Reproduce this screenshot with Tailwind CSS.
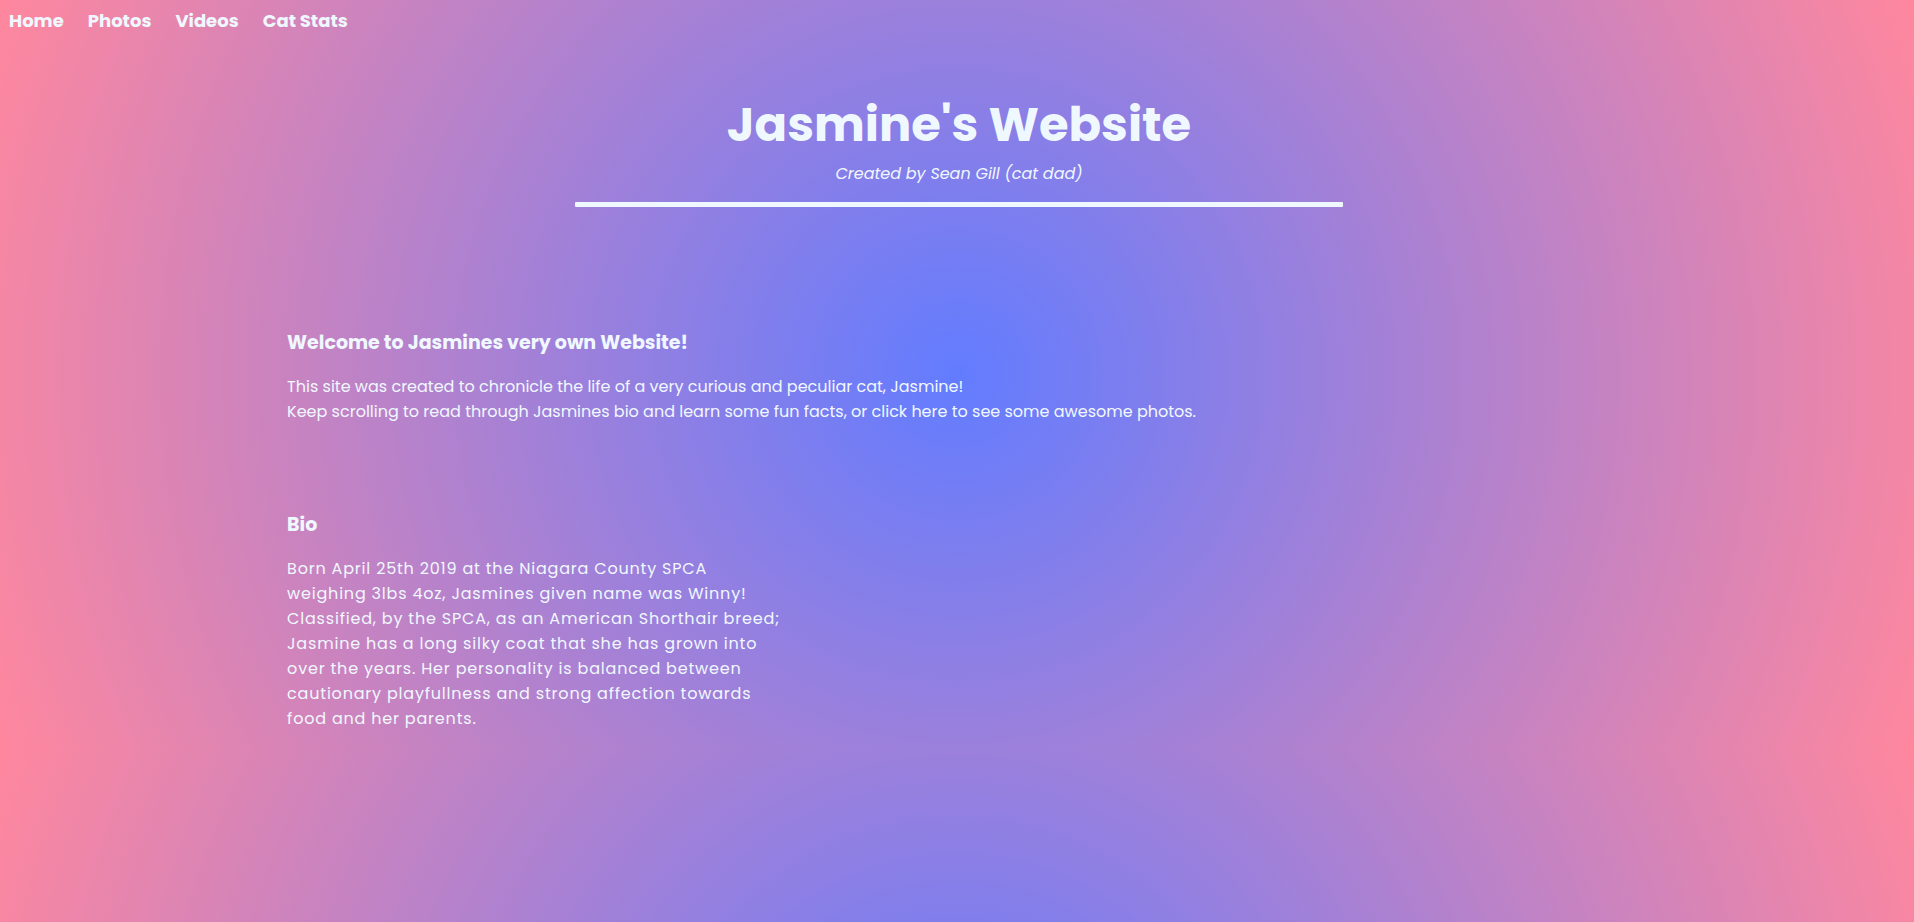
<!DOCTYPE html>
<html lang="en">
<head>
<meta charset="utf-8">
<meta name="viewport" content="width=device-width, initial-scale=1">
<title>Jasmine's Website</title>
<script src="https://cdn.jsdelivr.net/npm/@tailwindcss/browser@4"></script>
</head>
<body class="bg-[radial-gradient(circle,#627cff_0%,#ff879e_100%)] pb-[18px] font-[Poppins,Inter,sans-serif] text-[aliceblue]">
<nav class="px-[9px] pt-[7px]">
  <ul class="flex gap-6 text-lg leading-[27px] font-bold">
    <li><a href="#">Home</a></li>
    <li><a href="#">Photos</a></li>
    <li><a href="#">Videos</a></li>
    <li><a href="#">Cat Stats</a></li>
  </ul>
</nav>
<header class="flex flex-col items-center pt-[55px] pl-1 text-center">
  <h1 class="text-5xl leading-[72px] font-bold">Jasmine's Website</h1>
  <p class="text-base leading-[26px] italic">Created by Sean Gill (cat dad)</p>
  <hr class="mt-[15px] h-[5px] w-full max-w-3xl rounded-[1px] border-0 bg-[aliceblue]">
</header>
<main class="px-[15%] pt-[121px]">
  <section>
    <h2 class="text-[19px] leading-[30px] font-bold">Welcome to Jasmines very own Website!</h2>
    <p class="mt-4 text-base leading-[25px]">This site was created to chronicle the life of a very curious and peculiar cat, Jasmine!<br>Keep scrolling to read through Jasmines bio and learn some fun facts, or click <a href="#">here</a> to see some awesome photos.</p>
  </section>
  <section class="pt-[86px]">
    <h2 class="text-[19px] leading-[30px] font-bold">Bio</h2>
    <p class="mt-4 max-w-[498px] text-base leading-[25px] tracking-wider">Born April 25th 2019 at the Niagara County SPCA weighing 3lbs 4oz, Jasmines given name was Winny! Classified, by the SPCA, as an American Shorthair breed; Jasmine has a long silky coat that she has grown into over the years. Her personality is balanced between cautionary playfullness and strong affection towards food and her parents.</p>
  </section>
</main>
</body>
</html>
